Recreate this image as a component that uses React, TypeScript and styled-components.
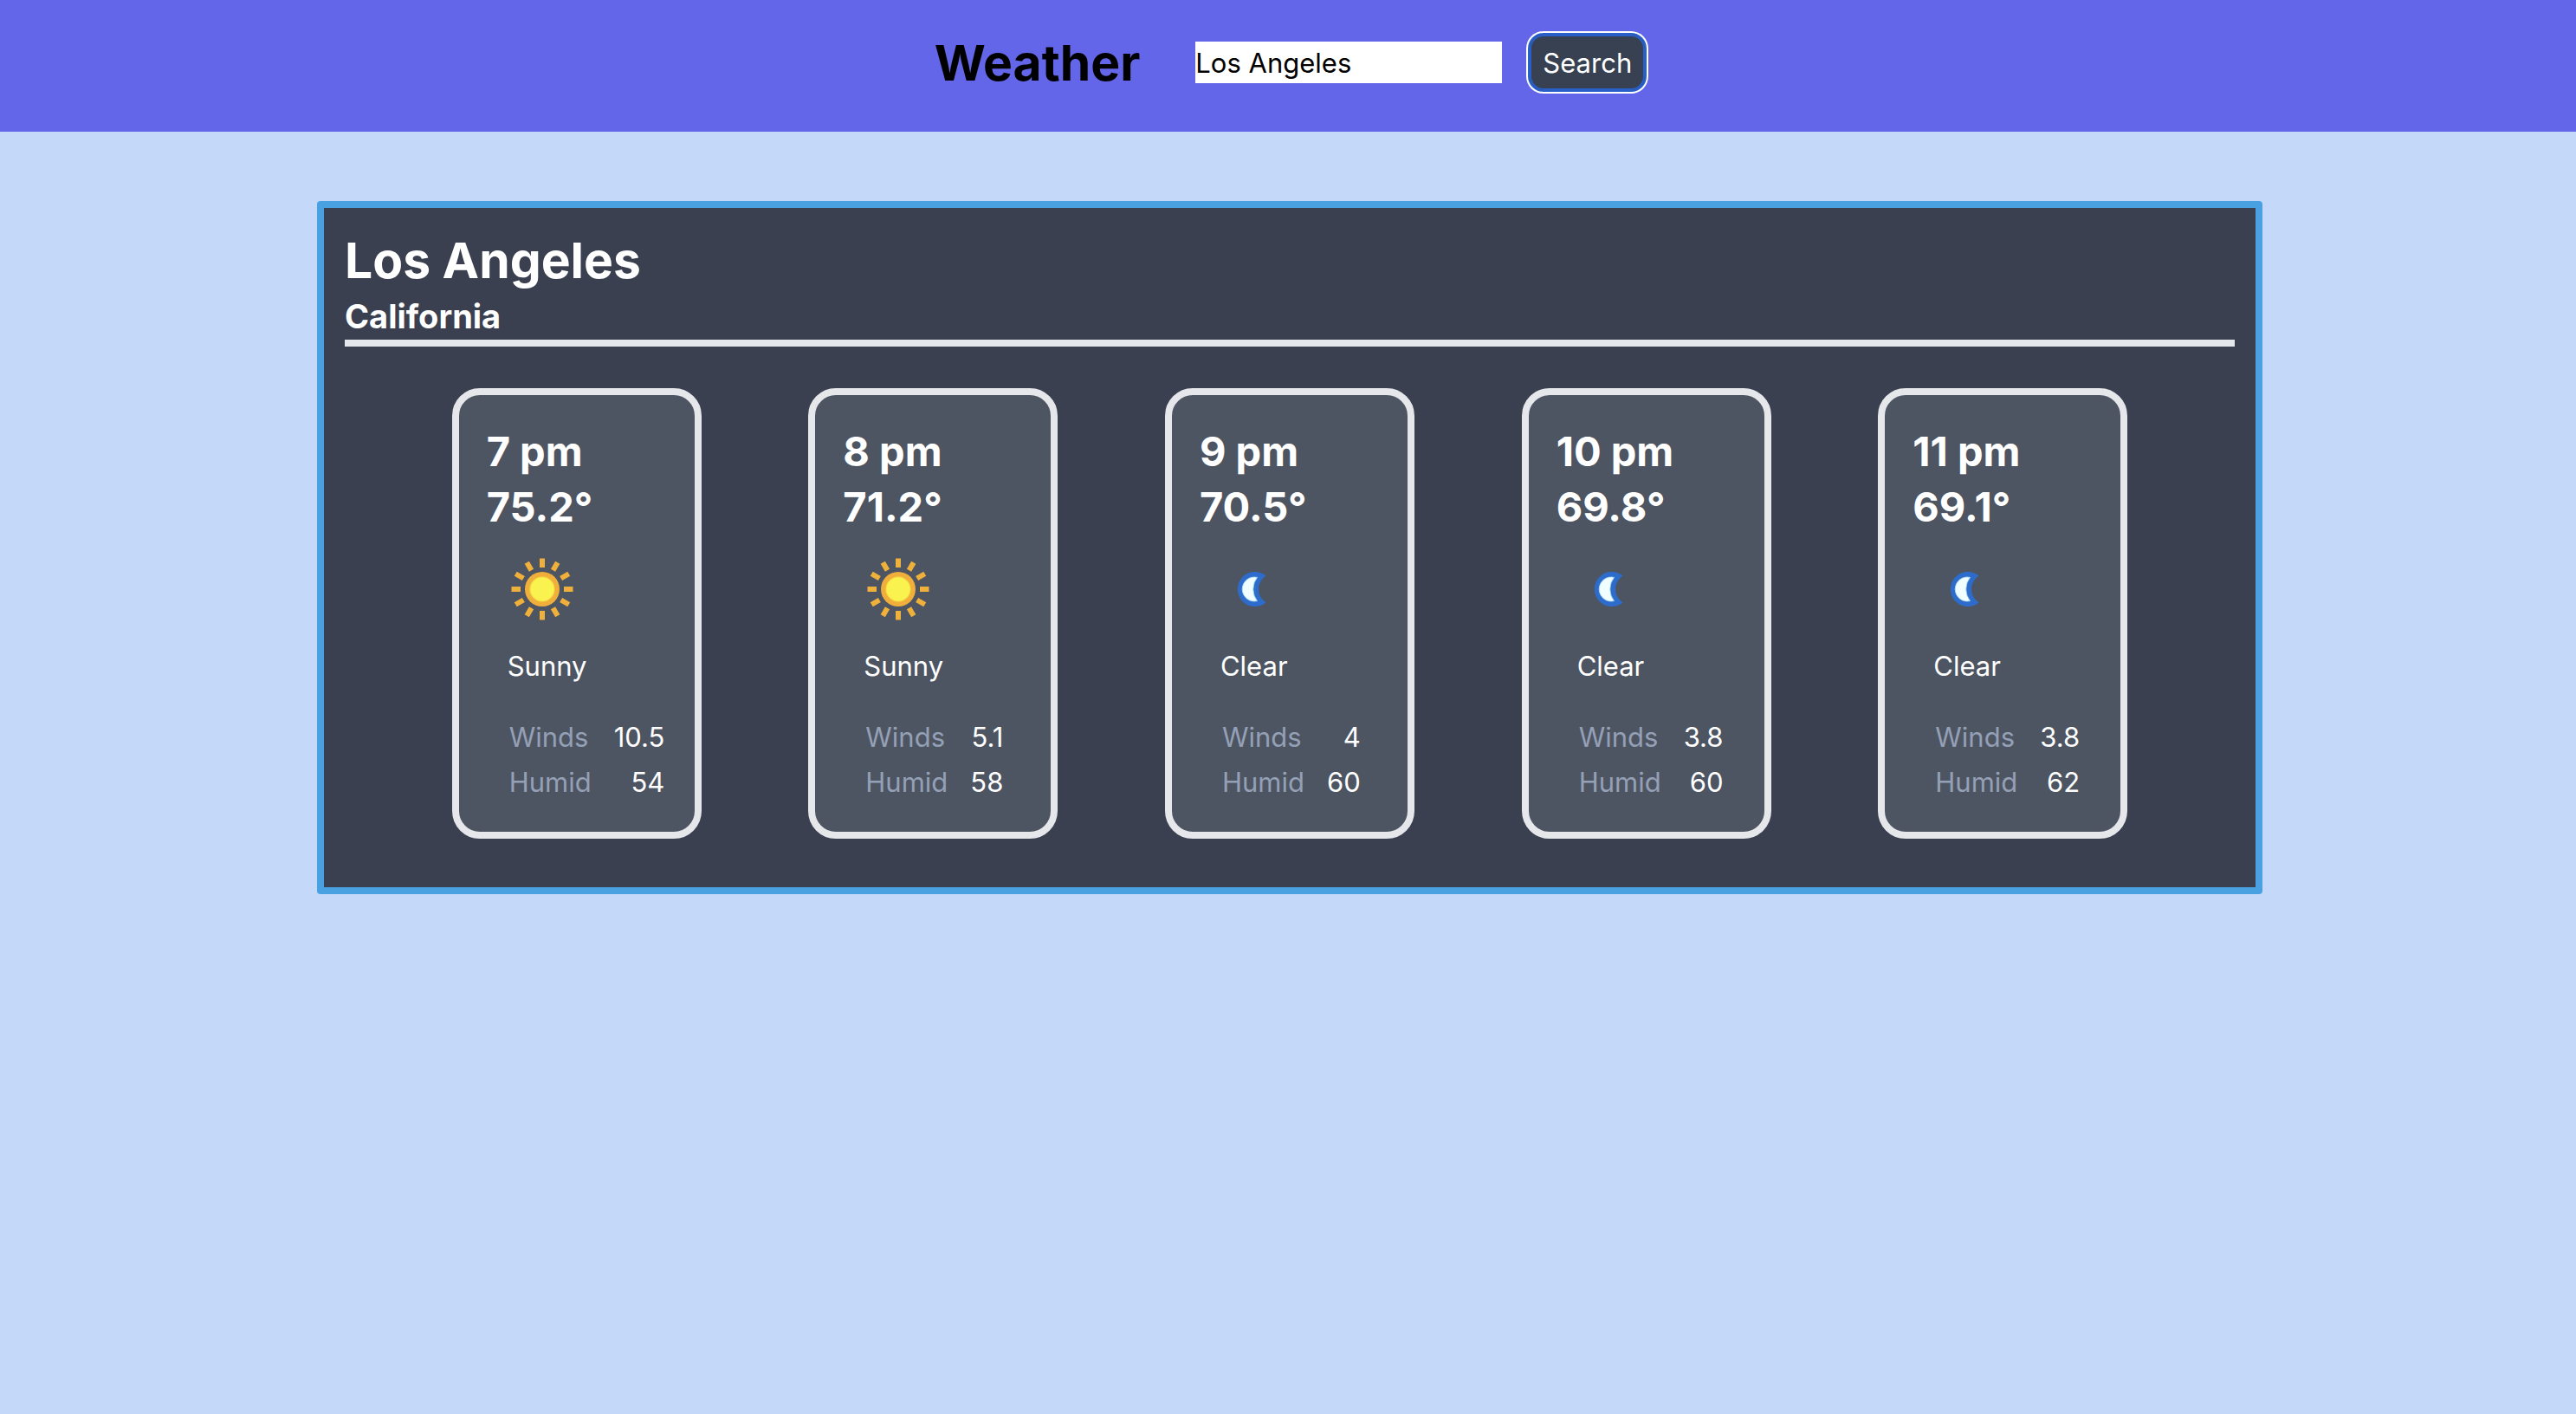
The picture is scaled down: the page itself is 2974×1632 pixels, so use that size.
import React, { useState } from "react";
import styled, { createGlobalStyle } from "styled-components";

const GlobalStyle = createGlobalStyle`
  *, *::before, *::after { box-sizing: border-box; }
  body {
    margin: 0;
    background: #c4d9fa;
    color: #000;
    font-family: Inter, "Liberation Sans", sans-serif;
    font-size: 31px;
    line-height: 46px;
  }
  h1, h2, h3, h4, p { margin: 0; }
`;

const Header = styled.header`
  display: flex;
  justify-content: center;
  padding: 36px 0 44px 4px;
  background: #6366e8;
`;

const SearchForm = styled.form`
  display: flex;
  align-items: center;
  gap: 32px;
`;

const Brand = styled.h1`
  margin-right: 32px;
  padding-top: 2px;
  font-size: 57px;
  line-height: 70px;
  font-weight: 700;
`;

const SearchInput = styled.input`
  width: 354px;
  height: 48px;
  padding: 0;
  border: 0;
  border-radius: 0;
  background: #fff;
  color: #000;
  font: inherit;
  outline: none;
`;

const SearchButton = styled.button`
  height: 64px;
  padding: 2px 15px 0;
  border: 0;
  border-radius: 16px;
  background: #374151;
  color: #fff;
  font: inherit;
  box-shadow: inset 0 0 0 2px #285fc8, 0 0 0 2px #285fc8, 0 0 0 4px #fff;
  cursor: pointer;
`;

const Main = styled.main`
  display: grid;
  grid-template-columns: 366fr minmax(0, 2246fr) 362fr;
  padding: 80px 0;
`;

const Panel = styled.section`
  grid-column: 2;
  padding: 24px 24px 56px;
  border: 8px solid #4aa1e2;
  border-radius: 4px;
  background: #3a4050;
  color: #fff;
`;

const PlaceHeader = styled.div`
  margin-bottom: 48px;
  border-bottom: 8px solid #e4e7eb;
`;

const City = styled.h2`
  padding-top: 2px;
  font-size: 57px;
  line-height: 70px;
  font-weight: 700;
`;

const Region = styled.h3`
  padding-top: 2px;
  font-size: 38px;
  line-height: 54px;
  font-weight: 700;
`;

const HourList = styled.div`
  display: flex;
  flex-wrap: wrap;
  justify-content: space-evenly;
  row-gap: 48px;
`;

const HourCard = styled.article`
  width: 288px;
  padding: 32px;
  border: 8px solid #e5e7eb;
  border-radius: 32px;
  background: #4e5562;
`;

const Reading = styled.h4`
  padding-top: 2px;
  font-size: 47px;
  line-height: 62px;
  font-weight: 700;
`;

const WeatherIcon = styled.svg`
  display: block;
  width: 128px;
  height: 128px;
`;

const Condition = styled.p`
  padding: 2px 0 0 24px;
`;

const Details = styled.table`
  margin: 32px 0 0 24px;
  border-collapse: collapse;

  th, td { padding: 4px 2px 2px; }
`;

const DetailLabel = styled.th`
  color: #94a0b6;
  font-weight: 400;
  text-align: left;
`;

const DetailValue = styled.td`
  && { padding-left: 24px; }
  text-align: right;
`;

type Hour = { time: string; temp: string; condition: "Sunny" | "Clear"; wind: string; humidity: string };

const hours: Hour[] = [
  { time: "7 pm", temp: "75.2°", condition: "Sunny", wind: "10.5", humidity: "54" },
  { time: "8 pm", temp: "71.2°", condition: "Sunny", wind: "5.1", humidity: "58" },
  { time: "9 pm", temp: "70.5°", condition: "Clear", wind: "4", humidity: "60" },
  { time: "10 pm", temp: "69.8°", condition: "Clear", wind: "3.8", humidity: "60" },
  { time: "11 pm", temp: "69.1°", condition: "Clear", wind: "3.8", humidity: "62" },
];

const rays = Array.from({ length: 12 }, (_, i) => i * 30);

function Sun() {
  return (
    <WeatherIcon viewBox="0 0 128 128" aria-hidden="true">
      {rays.map((angle) => (
        <rect key={angle} x="61" y="28.5" width="6" height="10.5" fill="#f0b03c" transform={`rotate(${angle} 64 64)`} />
      ))}
      <circle cx="64" cy="64" r="20" fill="#f0ae3b" />
      <circle cx="64" cy="64" r="14.5" fill="#f5dc45" />
      <circle cx="64" cy="64" r="13.4" fill="#faf24e" />
    </WeatherIcon>
  );
}

function Moon() {
  return (
    <WeatherIcon viewBox="0 0 128 128" aria-hidden="true">
      <path d="M76.5 48.5A20 20 0 1 0 76.5 79.5A18.4 18.4 0 0 1 76.5 48.5Z" fill="#2d6ccb" />
      <path d="M66.5 50.4A14 14 0 1 0 66.5 77.6A22 22 0 0 1 66.5 50.4Z" fill="#f0feff" stroke="#a9dcf3" strokeWidth="0.8" />
    </WeatherIcon>
  );
}

export default function App() {
  const [query, setQuery] = useState("Los Angeles");

  return (
    <>
      <GlobalStyle />
      <Header>
        <SearchForm onSubmit={(event) => event.preventDefault()}>
          <Brand>Weather</Brand>
          <SearchInput
            type="text"
            aria-label="City"
            value={query}
            onChange={(event) => setQuery(event.target.value)}
          />
          <SearchButton type="submit">Search</SearchButton>
        </SearchForm>
      </Header>
      <Main>
        <Panel>
          <PlaceHeader>
            <City>Los Angeles</City>
            <Region>California</Region>
          </PlaceHeader>
          <HourList>
            {hours.map((hour) => (
              <HourCard key={hour.time}>
                <Reading>{hour.time}</Reading>
                <Reading>{hour.temp}</Reading>
                {hour.condition === "Sunny" ? <Sun /> : <Moon />}
                <Condition>{hour.condition}</Condition>
                <Details>
                  <tbody>
                    <tr>
                      <DetailLabel scope="row">Winds</DetailLabel>
                      <DetailValue>{hour.wind}</DetailValue>
                    </tr>
                    <tr>
                      <DetailLabel scope="row">Humid</DetailLabel>
                      <DetailValue>{hour.humidity}</DetailValue>
                    </tr>
                  </tbody>
                </Details>
              </HourCard>
            ))}
          </HourList>
        </Panel>
      </Main>
    </>
  );
}
